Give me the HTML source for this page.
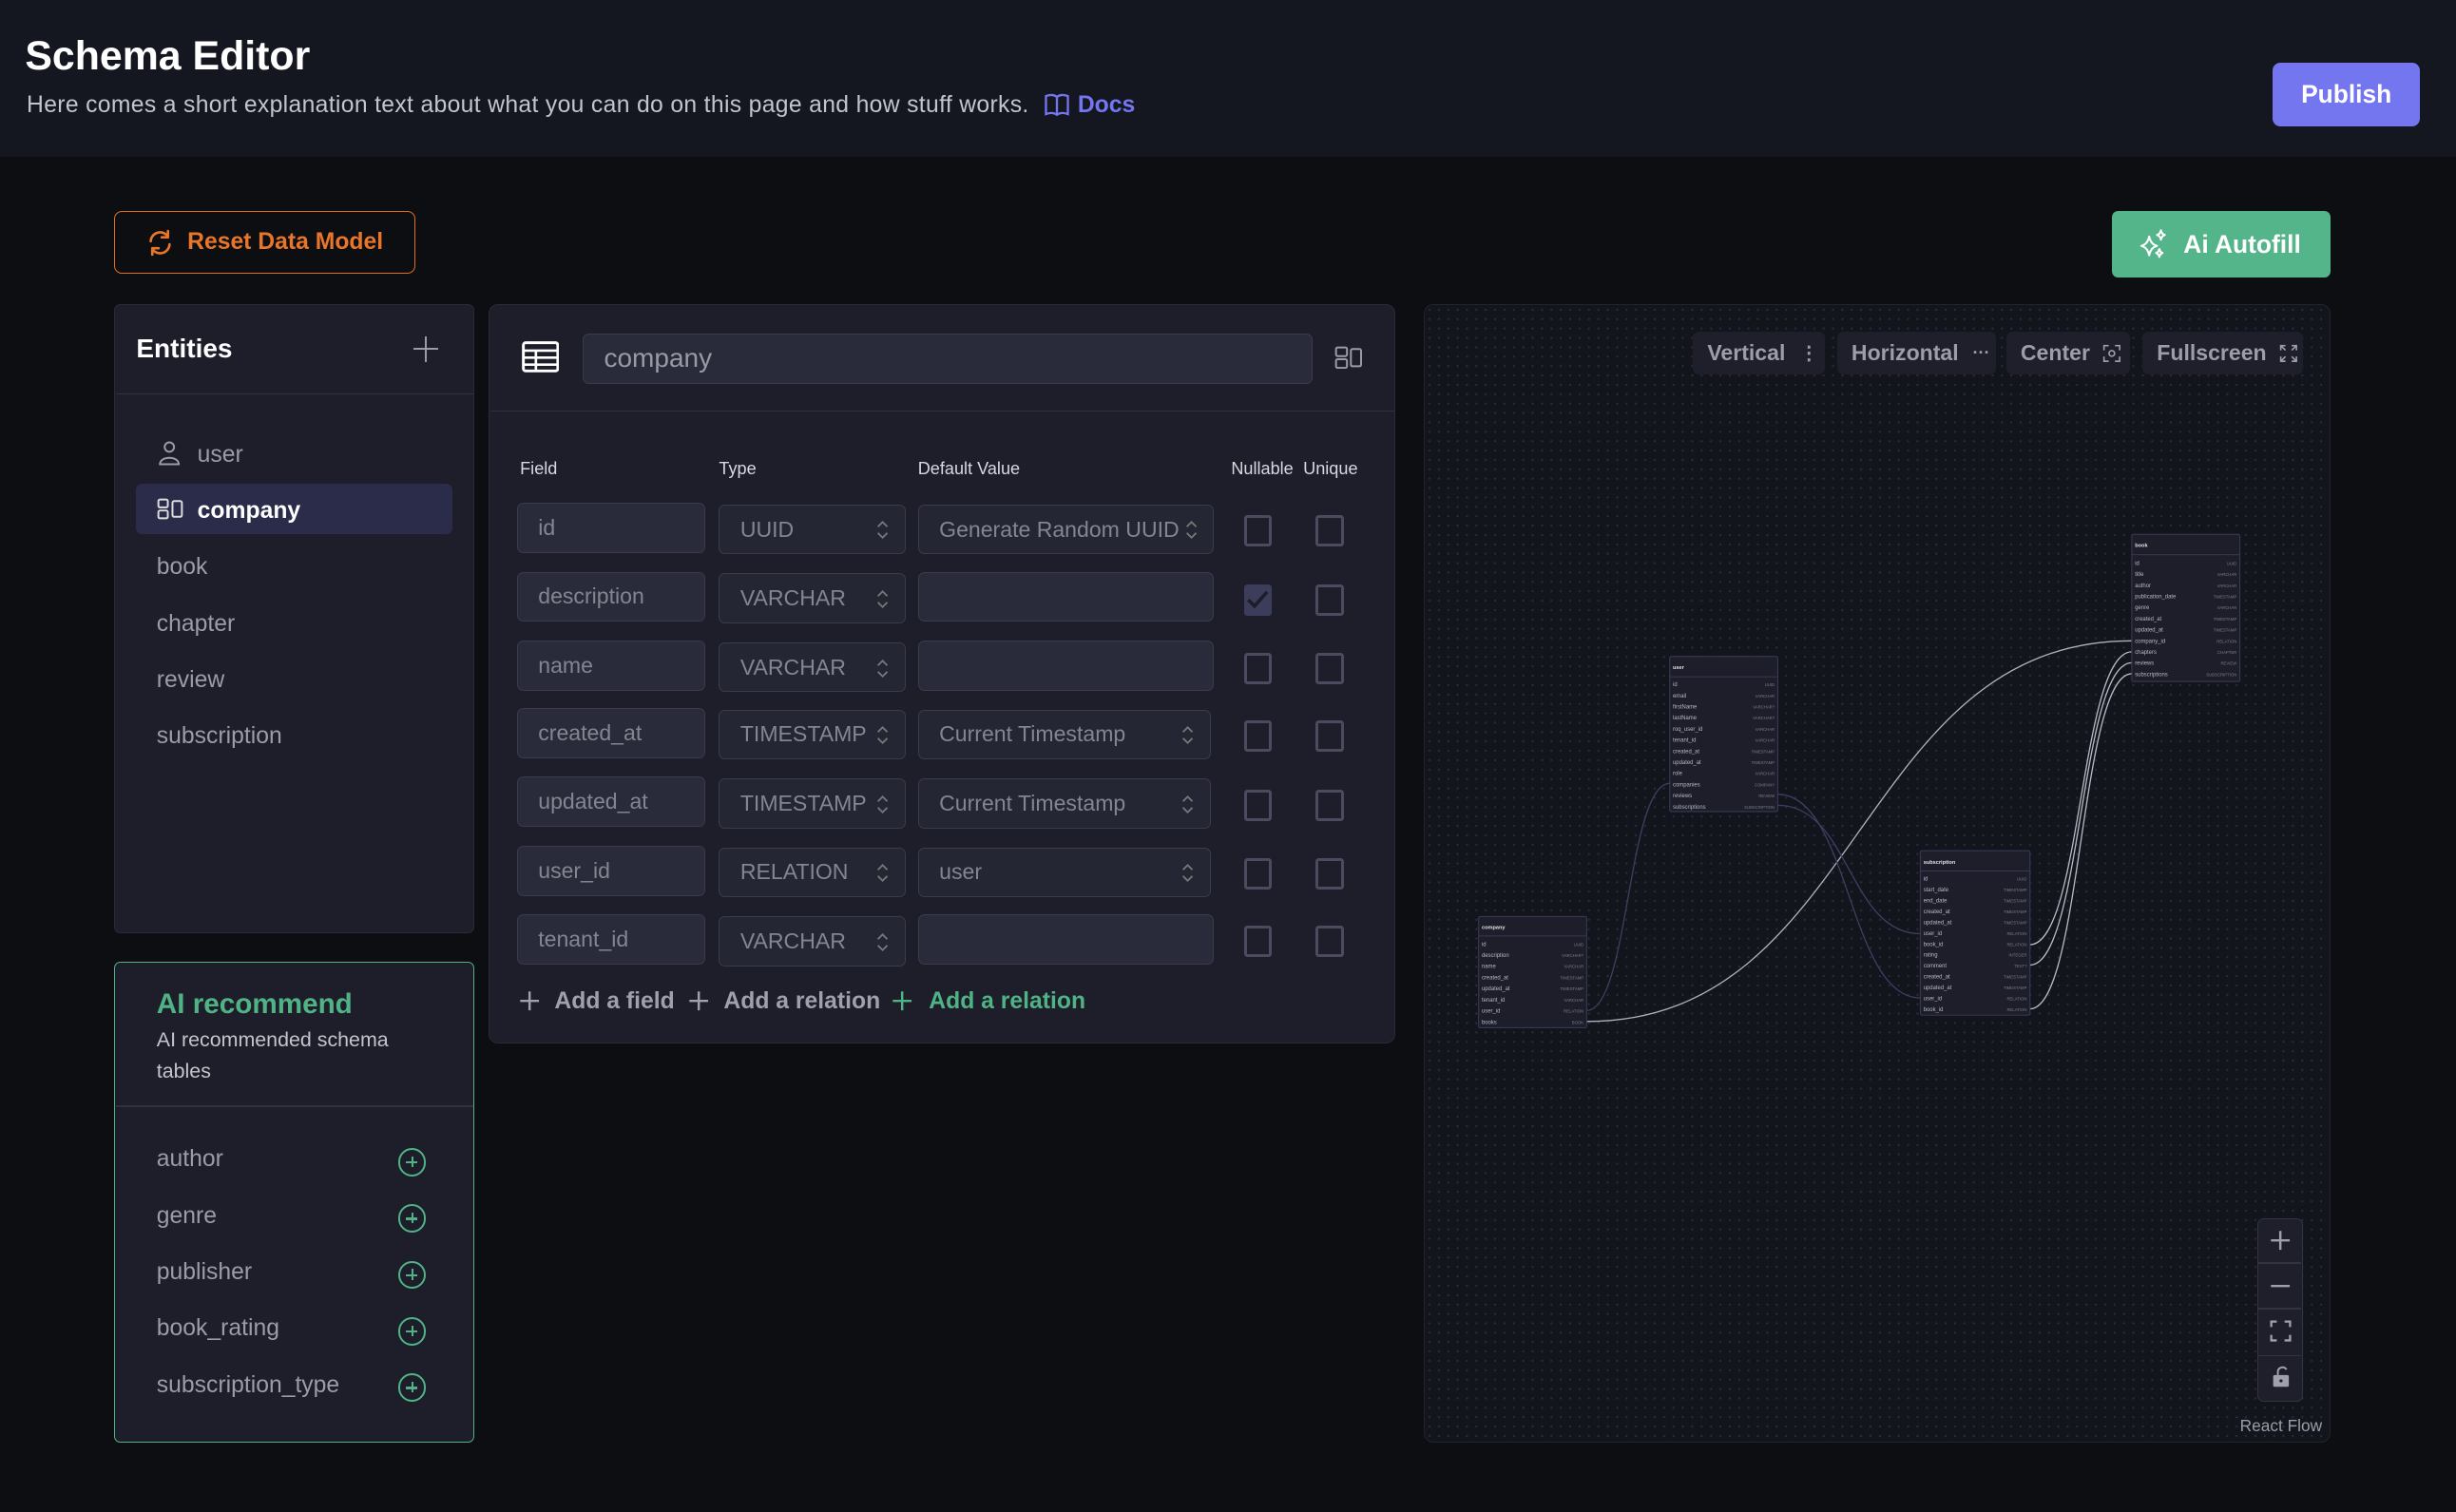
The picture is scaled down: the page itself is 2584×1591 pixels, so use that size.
<!DOCTYPE html>
<html><head><meta charset="utf-8"><style>
*{box-sizing:border-box;margin:0;padding:0}
html,body{width:2584px;height:1591px;overflow:hidden;background:#0d0e12}
#w{zoom:1.648;width:1568px;height:966px;position:relative;font-family:"Liberation Sans",sans-serif;background:#0d0e12;color:#ddd}
.a{position:absolute}
.hdr{left:0;top:0;width:1568px;height:100px;background:#141720}
.inp{position:absolute;background:#2a2b3a;border:1px solid #3a3b4b;border-radius:4px;color:#858592;font-size:14px;padding-left:13px;display:flex;align-items:center;height:32px}
.sel{background:#252634}
.arr{position:absolute;right:10px;top:9px;width:8px;height:14px}
.cb{position:absolute;width:18px;height:20px;border:2px solid #4a4b5e;border-radius:2px}
.hd{position:absolute;top:293px;font-size:11px;color:#d8d8e0}
.ent{position:absolute;left:100px;font-size:15px;color:#9c9ca8}
.rec{position:absolute;left:100px;font-size:15px;color:#9c9ca8}
.pl{position:absolute;left:254px;width:18px;height:18px;border:1.5px solid #4fb386;border-radius:50%}
.pl:before{content:"";position:absolute;left:4px;top:7.3px;width:7px;height:1.5px;background:#4fb386}
.pl:after{content:"";position:absolute;left:7.3px;top:4px;width:1.5px;height:7px;background:#4fb386}
.fb{position:absolute;top:212px;height:27px;background:#1e1f2a;border-radius:4px;color:#9c9cab;font-weight:bold;font-size:14px;display:flex;align-items:center;padding-left:9px}
svg text{font-family:"Liberation Sans",sans-serif}
.n{font-size:3.6px;fill:#b8b8c4}
.t{font-size:2.6px;fill:#7c7c8c}
.h{font-size:3.4px;fill:#e0e0e8;font-weight:bold}
</style></head><body><div id="w">
<div class="a hdr"></div>
<div class="a" style="left:16px;top:21px;font-size:26px;color:#fff;font-weight:bold">Schema Editor</div>
<div class="a" style="left:17px;top:59px;font-size:15px;color:#c4c4cc;letter-spacing:0.2px">Here comes a short explanation text about what you can do on this page and how stuff works.</div>
<svg class="a" style="left:666px;top:59px" width="17" height="16" viewBox="0 0 17 16"><path d="M1.5 2.5 C4 1.5 6.5 1.5 8.5 3 C10.5 1.5 13 1.5 15.5 2.5 V14 C13 13 10.5 13 8.5 14.5 C6.5 13 4 13 1.5 14 Z M8.5 3 V14.5" fill="none" stroke="#7476f0" stroke-width="1.4"/></svg>
<div class="a" style="left:688px;top:59px;font-size:15px;color:#7476f0;font-weight:bold">Docs</div>
<div class="a" style="left:1451px;top:40px;width:94px;height:41px;background:#7476f0;border-radius:5px;color:#fff;font-weight:bold;font-size:16px;display:flex;align-items:center;justify-content:center">Publish</div>

<div class="a" style="left:73px;top:135px;width:192px;height:40px;border:1px solid #e07020;border-radius:5px;color:#e8762a;font-weight:bold;font-size:15px;display:flex;align-items:center;padding-left:46px">Reset Data Model</div>
<svg class="a" style="left:92px;top:145px" width="20" height="20" viewBox="0 0 20 20"><path d="M4 9 A6 6 0 0 1 15 6 M15 2.5 V6.5 H11 M16 11 A6 6 0 0 1 5 14 M5 17.5 V13.5 H9" fill="none" stroke="#e8762a" stroke-width="1.6" stroke-linecap="round" stroke-linejoin="round"/></svg>

<div class="a" style="left:1348px;top:135px;width:140px;height:42px;background:#54b58a;border-radius:4px;color:#fff;font-weight:bold;font-size:16px;display:flex;align-items:center;padding-left:46px">Ai Autofill</div>
<svg class="a" style="left:1364px;top:145px" width="22" height="22" viewBox="0 0 22 22"><path d="M8 6 Q9 11 13 12 Q9 13 8 18 Q7 13 3 12 Q7 11 8 6Z M15.5 2 Q16 4.5 18 5 Q16 5.5 15.5 8 Q15 5.5 13 5 Q15 4.5 15.5 2Z M14.5 14 Q15 16 16.5 16.5 Q15 17 14.5 19 Q14 17 12.5 16.5 Q14 16 14.5 14Z" fill="none" stroke="#fff" stroke-width="1.3" stroke-linejoin="round"/></svg>

<!-- Entities -->
<div class="a" style="left:73px;top:194px;width:230px;height:402px;background:#1d1e29;border:1px solid #2a2b36;border-radius:4px"></div>
<div class="a" style="left:87px;top:213px;font-size:17px;color:#fff;font-weight:bold">Entities</div>
<div class="a" style="left:264px;top:222px;width:16px;height:1.3px;background:#9a9aa8"></div>
<div class="a" style="left:271.3px;top:215px;width:1.3px;height:16px;background:#9a9aa8"></div>
<div class="a" style="left:74px;top:251px;width:228px;height:1px;background:#30313c"></div>
<svg class="a" style="left:100px;top:281px" width="16" height="17" viewBox="0 0 16 17"><circle cx="8" cy="4.5" r="3" fill="none" stroke="#9c9ca8" stroke-width="1.2"/><path d="M2 15.5 C2 10 14 10 14 15.5 Z" fill="none" stroke="#9c9ca8" stroke-width="1.2"/></svg>
<div class="ent" style="left:126px;top:282px">user</div>
<div class="a" style="left:87px;top:309px;width:202px;height:32px;background:#2a2c4a;border-radius:4px"></div>
<svg class="a" style="left:100px;top:318px" width="17" height="14" viewBox="0 0 17 14"><rect x="1" y="1" width="6" height="5" rx="1" fill="none" stroke="#ddd" stroke-width="1.2"/><rect x="1" y="8" width="6" height="5" rx="1" fill="none" stroke="#ddd" stroke-width="1.2"/><rect x="10" y="2" width="6" height="10" rx="1" fill="none" stroke="#ddd" stroke-width="1.2"/></svg>
<div class="ent" style="left:126px;top:318px;color:#fff;font-weight:bold">company</div>
<div class="ent" style="top:354px">book</div>
<div class="ent" style="top:390px">chapter</div>
<div class="ent" style="top:426px">review</div>
<div class="ent" style="top:462px">subscription</div>

<!-- AI recommend -->
<div class="a" style="left:73px;top:614px;width:230px;height:307px;background:#1d1e29;border:1px solid #4fb386;border-radius:4px"></div>
<div class="a" style="left:100px;top:631px;font-size:18px;color:#4fb386;font-weight:bold">AI recommend</div>
<div class="a" style="left:100px;top:654px;font-size:13px;color:#c4c4cc;line-height:20px;width:170px">AI recommended schema tables</div>
<div class="a" style="left:74px;top:706px;width:228px;height:1px;background:#30313c"></div>
<div class="rec" style="top:732px">author</div><div class="pl" style="top:733px"></div>
<div class="rec" style="top:768px">genre</div><div class="pl" style="top:769px"></div>
<div class="rec" style="top:804px">publisher</div><div class="pl" style="top:805px"></div>
<div class="rec" style="top:840px">book_rating</div><div class="pl" style="top:841px"></div>
<div class="rec" style="top:876px">subscription_type</div><div class="pl" style="top:877px"></div>

<!-- Center panel -->
<div class="a" style="left:312px;top:194px;width:579px;height:472px;background:#1d1e29;border:1px solid #2a2b36;border-radius:6px"></div>
<svg class="a" style="left:333px;top:218px" width="24" height="20" viewBox="0 0 24 20"><rect x="1" y="1" width="22" height="18" rx="1.5" fill="none" stroke="#fff" stroke-width="1.8"/><path d="M1 6 H23 M1 10.5 H23 M1 15 H23 M9 6 V19" stroke="#fff" stroke-width="1.6"/></svg>
<div class="inp" style="left:372px;top:213px;width:466px;height:32px;font-size:17px;color:#9a9aa6">company</div>
<svg class="a" style="left:852px;top:221px" width="18" height="15" viewBox="0 0 18 15"><rect x="1" y="1" width="7" height="5.5" rx="1" fill="none" stroke="#9c9ca8" stroke-width="1.2"/><rect x="1" y="8.5" width="7" height="5.5" rx="1" fill="none" stroke="#9c9ca8" stroke-width="1.2"/><rect x="10.5" y="2" width="6.5" height="11" rx="1" fill="none" stroke="#9c9ca8" stroke-width="1.2"/></svg>
<div class="a" style="left:313px;top:262px;width:577px;height:1px;background:#30313c"></div>
<div class="hd" style="left:332px">Field</div><div class="hd" style="left:459px">Type</div><div class="hd" style="left:586px">Default Value</div><div class="hd" style="left:786px">Nullable</div><div class="hd" style="left:832px">Unique</div>

<!-- rows -->
<div class="inp" style="left:330px;top:321px;width:120px">id</div>
<div class="inp sel" style="left:459px;top:322px;width:119px">UUID<svg class="arr" viewBox="0 0 8 14"><path d="M1 5 L4 2 L7 5 M1 9 L4 12 L7 9" fill="none" stroke="#777" stroke-width="1.1"/></svg></div>
<div class="inp sel" style="left:586px;top:322px;width:189px">Generate Random UUID<svg class="arr" viewBox="0 0 8 14"><path d="M1 5 L4 2 L7 5 M1 9 L4 12 L7 9" fill="none" stroke="#777" stroke-width="1.1"/></svg></div>
<div class="cb" style="left:794px;top:329px"></div><div class="cb" style="left:840px;top:329px"></div>

<div class="inp" style="left:330px;top:365px;width:120px">description</div>
<div class="inp sel" style="left:459px;top:366px;width:119px">VARCHAR<svg class="arr" viewBox="0 0 8 14"><path d="M1 5 L4 2 L7 5 M1 9 L4 12 L7 9" fill="none" stroke="#777" stroke-width="1.1"/></svg></div>
<div class="inp" style="left:586px;top:365px;width:189px"></div>
<div class="cb" style="left:794px;top:373px;background:#3b3d5a;border-color:#3b3d5a"></div>
<svg class="a" style="left:795px;top:375px" width="16" height="16" viewBox="0 0 16 16"><path d="M2 8 L6 12 L14 3" fill="none" stroke="#1d1e29" stroke-width="2.2"/></svg>
<div class="cb" style="left:840px;top:373px"></div>

<div class="inp" style="left:330px;top:409px;width:120px">name</div>
<div class="inp sel" style="left:459px;top:410px;width:119px">VARCHAR<svg class="arr" viewBox="0 0 8 14"><path d="M1 5 L4 2 L7 5 M1 9 L4 12 L7 9" fill="none" stroke="#777" stroke-width="1.1"/></svg></div>
<div class="inp" style="left:586px;top:409px;width:189px"></div>
<div class="cb" style="left:794px;top:417px"></div><div class="cb" style="left:840px;top:417px"></div>

<div class="inp" style="left:330px;top:452px;width:120px">created_at</div>
<div class="inp sel" style="left:459px;top:453px;width:119px">TIMESTAMP<svg class="arr" viewBox="0 0 8 14"><path d="M1 5 L4 2 L7 5 M1 9 L4 12 L7 9" fill="none" stroke="#777" stroke-width="1.1"/></svg></div>
<div class="inp sel" style="left:586px;top:453px;width:187px">Current Timestamp<svg class="arr" viewBox="0 0 8 14"><path d="M1 5 L4 2 L7 5 M1 9 L4 12 L7 9" fill="none" stroke="#777" stroke-width="1.1"/></svg></div>
<div class="cb" style="left:794px;top:460px"></div><div class="cb" style="left:840px;top:460px"></div>

<div class="inp" style="left:330px;top:496px;width:120px">updated_at</div>
<div class="inp sel" style="left:459px;top:497px;width:119px">TIMESTAMP<svg class="arr" viewBox="0 0 8 14"><path d="M1 5 L4 2 L7 5 M1 9 L4 12 L7 9" fill="none" stroke="#777" stroke-width="1.1"/></svg></div>
<div class="inp sel" style="left:586px;top:497px;width:187px">Current Timestamp<svg class="arr" viewBox="0 0 8 14"><path d="M1 5 L4 2 L7 5 M1 9 L4 12 L7 9" fill="none" stroke="#777" stroke-width="1.1"/></svg></div>
<div class="cb" style="left:794px;top:504px"></div><div class="cb" style="left:840px;top:504px"></div>

<div class="inp" style="left:330px;top:540px;width:120px">user_id</div>
<div class="inp sel" style="left:459px;top:541px;width:119px">RELATION<svg class="arr" viewBox="0 0 8 14"><path d="M1 5 L4 2 L7 5 M1 9 L4 12 L7 9" fill="none" stroke="#777" stroke-width="1.1"/></svg></div>
<div class="inp sel" style="left:586px;top:541px;width:187px">user<svg class="arr" viewBox="0 0 8 14"><path d="M1 5 L4 2 L7 5 M1 9 L4 12 L7 9" fill="none" stroke="#777" stroke-width="1.1"/></svg></div>
<div class="cb" style="left:794px;top:548px"></div><div class="cb" style="left:840px;top:548px"></div>

<div class="inp" style="left:330px;top:584px;width:120px">tenant_id</div>
<div class="inp sel" style="left:459px;top:585px;width:119px">VARCHAR<svg class="arr" viewBox="0 0 8 14"><path d="M1 5 L4 2 L7 5 M1 9 L4 12 L7 9" fill="none" stroke="#777" stroke-width="1.1"/></svg></div>
<div class="inp" style="left:586px;top:584px;width:189px"></div>
<div class="cb" style="left:794px;top:591px"></div><div class="cb" style="left:840px;top:591px"></div>

<svg class="a" style="left:330px;top:631px" width="16" height="16" viewBox="0 0 16 16"><path d="M8 2 V14 M2 8 H14" stroke="#a0a0ac" stroke-width="1.5"/></svg>
<div class="a" style="left:354px;top:631px;font-size:15px;color:#a0a0ac;font-weight:bold">Add a field</div>
<svg class="a" style="left:438px;top:631px" width="16" height="16" viewBox="0 0 16 16"><path d="M8 2 V14 M2 8 H14" stroke="#a0a0ac" stroke-width="1.5"/></svg>
<div class="a" style="left:462px;top:631px;font-size:15px;color:#a0a0ac;font-weight:bold">Add a relation</div>
<svg class="a" style="left:568px;top:631px" width="16" height="16" viewBox="0 0 16 16"><path d="M8 2 V14 M2 8 H14" stroke="#4fb386" stroke-width="1.5"/></svg>
<div class="a" style="left:593px;top:631px;font-size:15px;color:#4fb386;font-weight:bold">Add a relation</div>

<!-- Flow panel -->
<div class="a" style="left:909px;top:194px;width:579px;height:727px;background-color:#13151d;background-image:radial-gradient(circle,#2a2d39 0.6px,transparent 0.8px);background-size:6px 6px;border:1px solid #22242c;border-radius:6px"></div>
<div class="fb" style="left:1081px;width:84px">Vertical<span style="margin-left:9px;font-size:12px">⋮</span></div>
<div class="fb" style="left:1173px;width:101px">Horizontal<span style="margin-left:9px;font-size:11px">···</span></div>
<div class="fb" style="left:1281px;width:79px">Center<svg style="margin-left:8px" width="12" height="12" viewBox="0 0 12 12"><path d="M1 4 V1 H4 M8 1 H11 V4 M11 8 V11 H8 M4 11 H1 V8" fill="none" stroke="#9c9cab" stroke-width="1"/><circle cx="6" cy="6" r="1.8" fill="none" stroke="#9c9cab" stroke-width="1"/></svg></div>
<div class="fb" style="left:1368px;width:102px">Fullscreen<svg style="margin-left:8px" width="12" height="12" viewBox="0 0 12 12"><path d="M1 4 V1 H4 M1 1 L4 4 M8 1 H11 V4 M11 1 L8 4 M11 8 V11 H8 M11 11 L8 8 M4 11 H1 V8 M1 11 L4 8" fill="none" stroke="#9c9cab" stroke-width="1"/></svg></div>

<svg class="a" style="left:909px;top:194px" width="579" height="727" viewBox="0 0 579 727">
<g fill="none" stroke-width="0.8">
<path d="M104 458 C280 458 276 215 452 215" stroke="#b0b0bc"/>
<path d="M104 451 C131 451 130 306 157 306" stroke="#3e3f60"/>
<path d="M226 313 C272 313 271 443 317 443" stroke="#3e3f60"/>
<path d="M226 320 C272 320 271 402 317 402" stroke="#3e3f60"/>
<path d="M387 409 C420 409 419 222 452 222" stroke="#b8b8c4"/>
<path d="M387 422 C420 422 419 229 452 229" stroke="#b8b8c4"/>
<path d="M387 450 C420 450 419 236 452 236" stroke="#b8b8c4"/>
</g>
<g stroke="#3a3c5a" stroke-width="0.6" fill="#1d1e29">
<rect x="452" y="147" width="69" height="94" rx="1"/>
<rect x="157" y="225" width="69" height="99" rx="1"/>
<rect x="317" y="349" width="70" height="105" rx="1"/>
<rect x="35" y="391" width="69" height="71" rx="1"/>
</g>
<g stroke="#3a3c5a" stroke-width="0.5">
<path d="M452 160 H521 M157 238 H226 M317 362 H387 M35 403.5 H104"/>
</g>
<text class="h" x="454" y="155">book</text>
<g class="n"><text x="454" y="166.5">id</text><text x="454" y="173.6">title</text><text x="454" y="180.7">author</text><text x="454" y="187.8">publication_date</text><text x="454" y="194.9">genre</text><text x="454" y="202">created_at</text><text x="454" y="209.1">updated_at</text><text x="454" y="216.2">company_id</text><text x="454" y="223.3">chapters</text><text x="454" y="230.4">reviews</text><text x="454" y="237.5">subscriptions</text></g>
<g class="t" text-anchor="end"><text x="519" y="166.5">UUID</text><text x="519" y="173.6">VARCHAR</text><text x="519" y="180.7">VARCHAR</text><text x="519" y="187.8">TIMESTAMP</text><text x="519" y="194.9">VARCHAR</text><text x="519" y="202">TIMESTAMP</text><text x="519" y="209.1">TIMESTAMP</text><text x="519" y="216.2">RELATION</text><text x="519" y="223.3">CHAPTER</text><text x="519" y="230.4">REVIEW</text><text x="519" y="237.5">SUBSCRIPTION</text></g>
<text class="h" x="159" y="233">user</text>
<g class="n"><text x="159" y="244">id</text><text x="159" y="251.1">email</text><text x="159" y="258.2">firstName</text><text x="159" y="265.3">lastName</text><text x="159" y="272.4">roq_user_id</text><text x="159" y="279.5">tenant_id</text><text x="159" y="286.6">created_at</text><text x="159" y="293.7">updated_at</text><text x="159" y="300.8">role</text><text x="159" y="307.9">companies</text><text x="159" y="315">reviews</text><text x="159" y="322.1">subscriptions</text></g>
<g class="t" text-anchor="end"><text x="224" y="244">UUID</text><text x="224" y="251.1">VARCHAR</text><text x="224" y="258.2">VARCHAR?</text><text x="224" y="265.3">VARCHAR?</text><text x="224" y="272.4">VARCHAR</text><text x="224" y="279.5">VARCHAR</text><text x="224" y="286.6">TIMESTAMP</text><text x="224" y="293.7">TIMESTAMP</text><text x="224" y="300.8">VARCHAR</text><text x="224" y="307.9">COMPANY</text><text x="224" y="315">REVIEW</text><text x="224" y="322.1">SUBSCRIPTION</text></g>
<text class="h" x="319" y="357.5">subscription</text>
<g class="n"><text x="319" y="368">id</text><text x="319" y="375">start_date</text><text x="319" y="382">end_date</text><text x="319" y="389">created_at</text><text x="319" y="396">updated_at</text><text x="319" y="403">user_id</text><text x="319" y="410">book_id</text><text x="319" y="416.5">rating</text><text x="319" y="423.5">comment</text><text x="319" y="430.5">created_at</text><text x="319" y="437.5">updated_at</text><text x="319" y="444.5">user_id</text><text x="319" y="451.5">book_id</text></g>
<g class="t" text-anchor="end"><text x="385" y="368">UUID</text><text x="385" y="375">TIMESTAMP</text><text x="385" y="382">TIMESTAMP</text><text x="385" y="389">TIMESTAMP</text><text x="385" y="396">TIMESTAMP</text><text x="385" y="403">RELATION</text><text x="385" y="410">RELATION</text><text x="385" y="416.5">INTEGER</text><text x="385" y="423.5">TEXT?</text><text x="385" y="430.5">TIMESTAMP</text><text x="385" y="437.5">TIMESTAMP</text><text x="385" y="444.5">RELATION</text><text x="385" y="451.5">RELATION</text></g>
<text class="h" x="37" y="399">company</text>
<g class="n"><text x="37" y="409.8">id</text><text x="37" y="416.9">description</text><text x="37" y="424">name</text><text x="37" y="431.1">created_at</text><text x="37" y="438.2">updated_at</text><text x="37" y="445.3">tenant_id</text><text x="37" y="452.4">user_id</text><text x="37" y="459.5">books</text></g>
<g class="t" text-anchor="end"><text x="102" y="409.8">UUID</text><text x="102" y="416.9">VARCHAR?</text><text x="102" y="424">VARCHAR</text><text x="102" y="431.1">TIMESTAMP</text><text x="102" y="438.2">TIMESTAMP</text><text x="102" y="445.3">VARCHAR</text><text x="102" y="452.4">RELATION</text><text x="102" y="459.5">BOOK</text></g>
</svg>

<!-- controls -->
<div class="a" style="left:1441px;top:778px;width:29px;height:117px;background:#1e1f2a;border:1px solid #33343f;border-radius:4px"></div>
<div class="a" style="left:1442px;top:806px;width:27px;height:1px;background:#33343f"></div>
<div class="a" style="left:1442px;top:835px;width:27px;height:1px;background:#33343f"></div>
<div class="a" style="left:1442px;top:865px;width:27px;height:1px;background:#33343f"></div>
<svg class="a" style="left:1448px;top:784px" width="16" height="16" viewBox="0 0 16 16"><path d="M8 2 V14 M2 8 H14" stroke="#a0a0ac" stroke-width="1.5"/></svg>
<svg class="a" style="left:1448px;top:813px" width="16" height="16" viewBox="0 0 16 16"><path d="M2 8 H14" stroke="#a0a0ac" stroke-width="1.5"/></svg>
<svg class="a" style="left:1449px;top:843px" width="14" height="14" viewBox="0 0 14 14"><path d="M1 4.5 V1 H4.5 M9.5 1 H13 V4.5 M13 9.5 V13 H9.5 M4.5 13 H1 V9.5" fill="none" stroke="#a0a0ac" stroke-width="1.4"/></svg>
<svg class="a" style="left:1450px;top:872px" width="12" height="14" viewBox="0 0 12 14"><path d="M4 6 V3.5 A3 3 0 0 1 9.5 2.5" fill="none" stroke="#a0a0ac" stroke-width="1.2"/><rect x="1" y="6" width="10" height="7.5" rx="1" fill="#a0a0ac"/><circle cx="6" cy="9.7" r="1" fill="#1e1f2a"/></svg>
<div class="a" style="left:1430px;top:904px;font-size:10.5px;color:#9c9ca8">React Flow</div>
</div></body></html>
